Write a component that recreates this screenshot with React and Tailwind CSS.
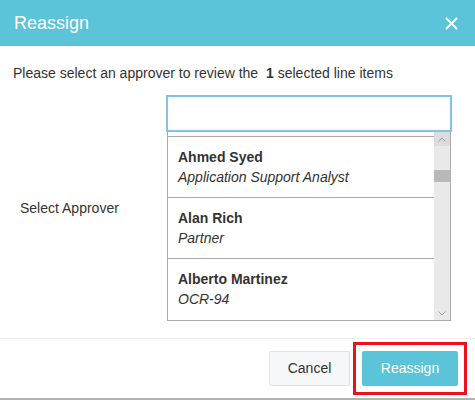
import React from "react";

const approvers = [
  { name: "Ahmed Syed", role: "Application Support Analyst" },
  { name: "Alan Rich", role: "Partner" },
  { name: "Alberto Martinez", role: "OCR-94" },
];

export default function App() {
  return (
    <div className="w-[475px] h-[400px] bg-white overflow-hidden flex flex-col text-[#333] font-['Liberation_Sans',Arial,sans-serif]">
      {/* header */}
      <div className="h-[46px] shrink-0 bg-[#5bc4d8] flex items-center justify-between pl-[14px] pr-[17px]">
        <span className="text-white text-[18px] leading-none">Reassign</span>
        <svg width="13" height="13" viewBox="0 0 13 13" className="text-white">
          <path d="M1 1 L12 12 M12 1 L1 12" stroke="currentColor" strokeWidth="2" />
        </svg>
      </div>

      {/* body */}
      <div className="pt-[17px] pl-[13px] pr-[23px] pb-[17px]">
        <p className="text-[14px] leading-[20px]">
          Please select an approver to review the <b className="ml-[4px]">1</b> selected line items
        </p>

        <div className="mt-[12px] flex items-center">
          <div className="w-[153px] pl-[7px] text-[14px] leading-[20px]">Select Approver</div>

          <div className="flex-1 flex flex-col">
            <div className="h-[37px] border-2 border-[#80c3ec] bg-white" />
            <div className="ml-[1px] mr-[1px] h-[189px] border border-t-0 border-[#aaa] flex">
              <div className="flex-1 flex flex-col overflow-hidden">
                <div className="h-[4px] shrink-0" />
                {approvers.map((a) => (
                  <div key={a.name} className="h-[61px] shrink-0 border-t border-[#aaa] pt-[10px] pl-[10px]">
                    <div className="text-[14px] leading-[20px] font-bold text-[#333]">{a.name}</div>
                    <div className="text-[14px] leading-[20px] italic text-[#333]">{a.role}</div>
                  </div>
                ))}
              </div>
              {/* scrollbar */}
              <div className="w-[16px] bg-[#e9e9e9] flex flex-col">
                <div className="h-[14px] bg-[#dcdcdc] flex items-center justify-center">
                  <svg width="8" height="5" viewBox="0 0 8 5">
                    <path d="M0.5 4.5 L4 1 L7.5 4.5" fill="none" stroke="#a0a0a0" strokeWidth="1" />
                  </svg>
                </div>
                <div className="mt-[24px] h-[12px] bg-[#b8b8b8]" />
                <div className="flex-1" />
                <div className="h-[14px] flex items-center justify-center">
                  <svg width="8" height="5" viewBox="0 0 8 5">
                    <path d="M0.5 0.5 L4 4 L7.5 0.5" fill="none" stroke="#a0a0a0" strokeWidth="1" />
                  </svg>
                </div>
              </div>
            </div>
          </div>
        </div>
      </div>

      {/* footer */}
      <div className="border-t border-[#eee] flex-1 flex flex-col">
        <div className="flex-1 flex items-center justify-end gap-[3px] pr-[8px]">
          <button className="w-[81px] h-[35px] bg-[#f5f7f9] border border-[#e3e3e3] rounded-[2px] text-[14px] text-[#333]">
            Cancel
          </button>
          <div className="border-[3px] border-[#e8141a] p-[6px]">
            <button className="w-[96px] h-[35px] bg-[#5bc4d8] rounded-[2px] text-[14px] text-white">
              Reassign
            </button>
          </div>
        </div>
        <div className="h-[2px] bg-[#b3b3b3]" />
      </div>
    </div>
  );
}
